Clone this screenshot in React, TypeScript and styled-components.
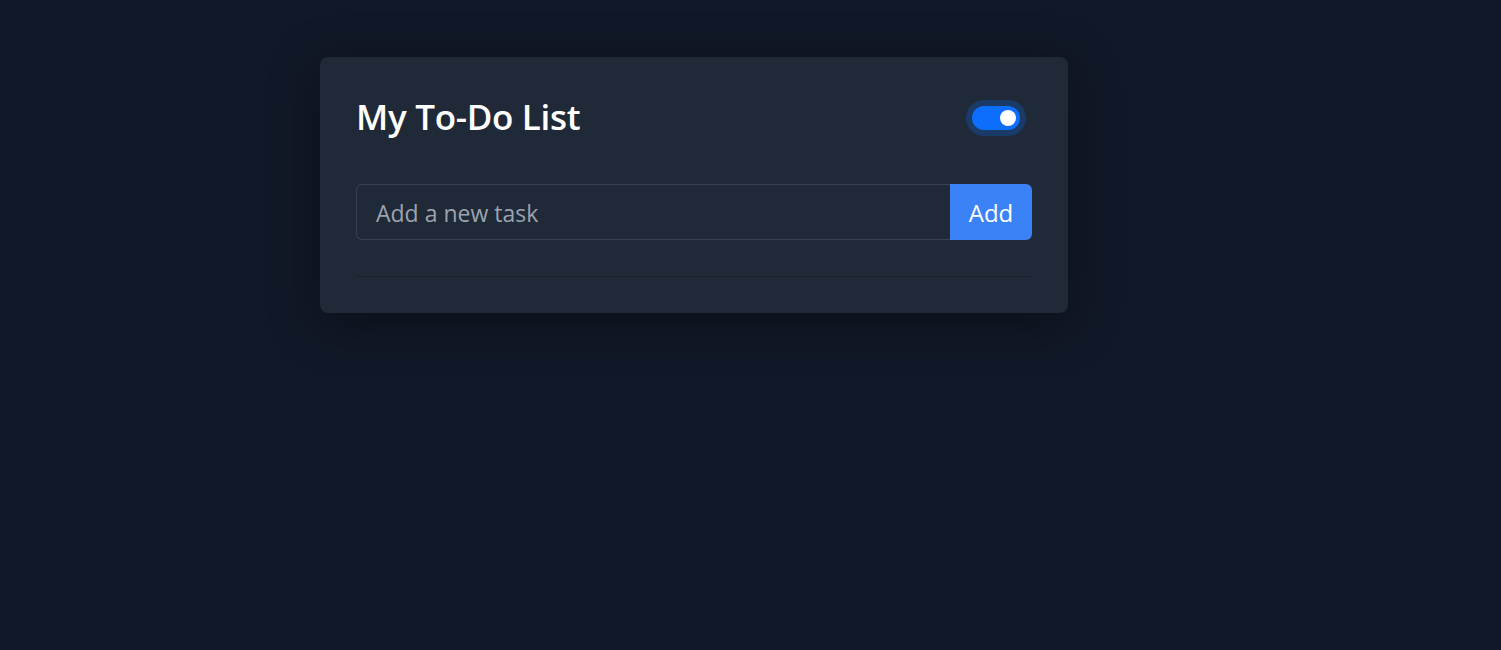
import React, { useState } from "react";
import styled, { createGlobalStyle } from "styled-components";

const GlobalStyle = createGlobalStyle`
  html, body {
    margin: 0;
    padding: 0;
    background: #111827;
    font-family: "Open Sans", "Noto Sans", "Liberation Sans", sans-serif;
  }
  * { box-sizing: border-box; }
`;

const Page = styled.div`
  min-height: 650px;
  background: #111827;
  padding: 57px 0 0 320px;
`;

const Card = styled.div`
  width: 748px;
  background: #1f2937;
  border-radius: 8px;
  padding: 36px;
  box-shadow: 0 10px 50px rgba(0, 0, 0, 0.35);
`;

const Header = styled.div`
  display: flex;
  align-items: center;
  justify-content: space-between;
  height: 50px;
  margin-bottom: 41px;
`;

const Title = styled.h1`
  margin: 0 0 3px;
  color: #ffffff;
  font-size: 35px;
  font-weight: 600;
  letter-spacing: -0.3px;
  line-height: 47px;
`;

const SwitchTrack = styled.button<{ $on: boolean }>`
  position: relative;
  width: 48px;
  height: 24px;
  margin-right: 12px;
  border: none;
  padding: 0;
  border-radius: 12px;
  background: ${(p) => (p.$on ? "#0d6efd" : "#4b5563")};
  box-shadow: 0 0 0 6px rgba(13, 110, 253, 0.25);
  cursor: pointer;
`;

const Knob = styled.span<{ $on: boolean }>`
  position: absolute;
  top: 4px;
  left: ${(p) => (p.$on ? "28px" : "4px")};
  width: 16px;
  height: 16px;
  border-radius: 50%;
  background: #ffffff;
`;

const InputRow = styled.form`
  display: flex;
  height: 56px;
`;

const TaskInput = styled.input`
  flex: 1;
  height: 56px;
  background: #1f2937;
  border: 1px solid #374151;
  border-right: none;
  border-radius: 6px 0 0 6px;
  padding: 1px 19px 0;
  color: #e5e7eb;
  font-family: inherit;
  font-size: 23px;
  outline: none;
  &::placeholder {
    color: #9ca3af;
  }
`;

const AddButton = styled.button`
  width: 82px;
  height: 56px;
  background: #3b82f6;
  color: #ffffff;
  border: none;
  border-radius: 0 6px 6px 0;
  font-family: inherit;
  font-size: 24px;
  cursor: pointer;
`;

const List = styled.ul`
  list-style: none;
  margin: 36px 0 0;
  padding: 0;
  border-top: 1px solid #1a2230;
`;

export default function App() {
  const [on, setOn] = useState(true);
  const [value, setValue] = useState("");
  return (
    <>
      <GlobalStyle />
      <Page>
        <Card>
          <Header>
            <Title>My To-Do List</Title>
            <SwitchTrack $on={on} onClick={() => setOn(!on)} aria-label="Toggle theme">
              <Knob $on={on} />
            </SwitchTrack>
          </Header>
          <InputRow onSubmit={(e) => e.preventDefault()}>
            <TaskInput
              placeholder="Add a new task"
              value={value}
              onChange={(e) => setValue(e.target.value)}
            />
            <AddButton type="submit">Add</AddButton>
          </InputRow>
          <List />
        </Card>
      </Page>
    </>
  );
}
